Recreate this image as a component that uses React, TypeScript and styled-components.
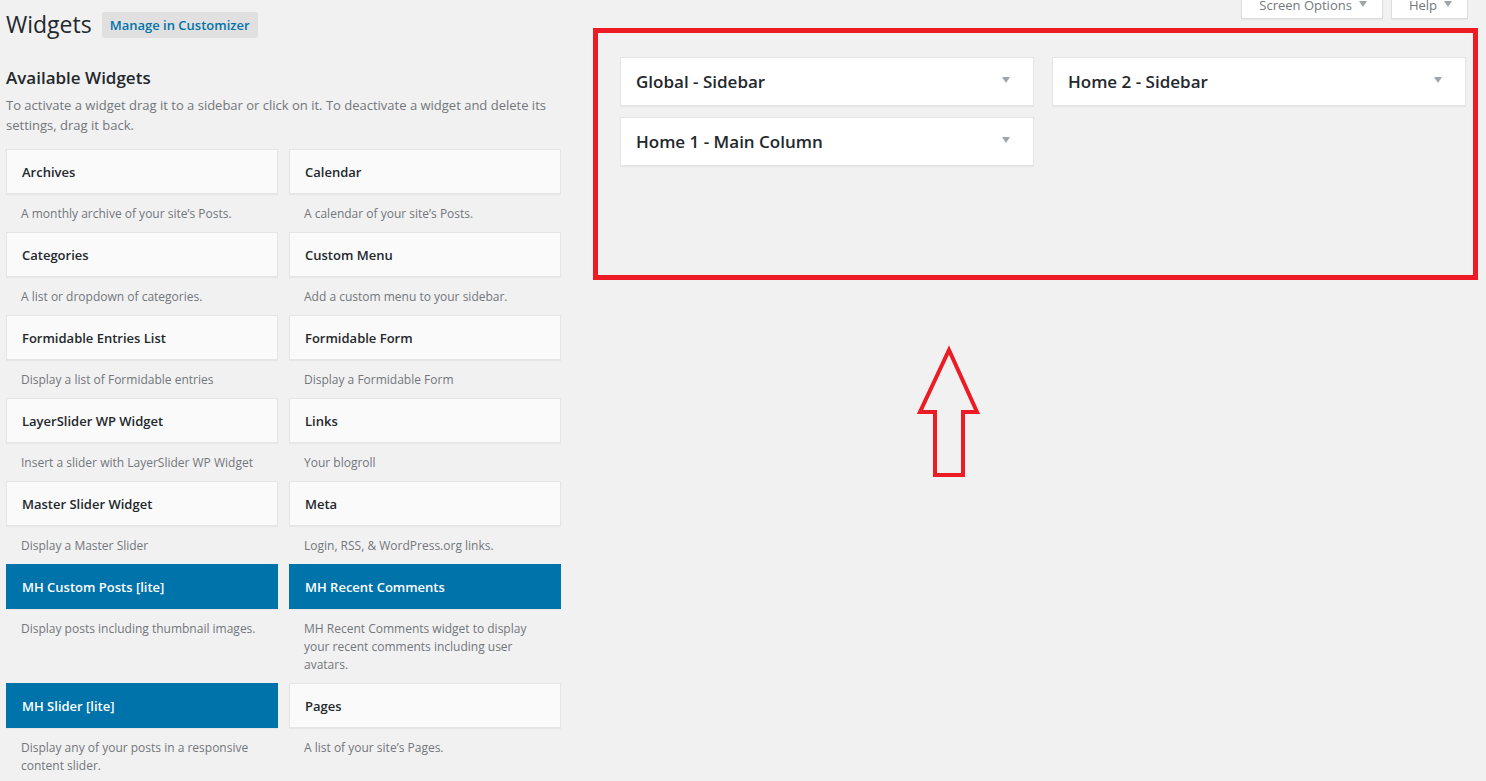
import styled, { createGlobalStyle } from "styled-components";

const GlobalStyle = createGlobalStyle`
    body {
        margin: 0;
        background: #f1f1f1;
        font-family: "Open Sans", "Noto Sans", sans-serif;
        color: #23282d;
    }
`;

const Page = styled.div`
    display: flex;
    align-items: flex-start;
    gap: 32px;
    padding-left: 6px;
`;

const LeftColumn = styled.div`
    width: 555px;
    flex-shrink: 0;
`;

const Header = styled.div`
    display: flex;
    align-items: center;
    gap: 10px;
    padding-top: 10px;
`;

const Title = styled.h1`
    margin: 0;
    font-size: 23px;
    line-height: 29px;
    font-weight: 400;
    color: #23282d;
`;

const CustomizerButton = styled.a`
    display: inline-flex;
    align-items: center;
    height: 26px;
    padding: 0 8px;
    border-radius: 2px;
    background: #e0e0e0;
    color: #0073aa;
    font-size: 13px;
    font-weight: 600;
    text-decoration: none;
`;

const SectionTitle = styled.h2`
    margin: 27px 0 0;
    font-size: 17px;
    line-height: 24px;
    font-weight: 600;
    color: #23282d;
`;

const SectionDesc = styled.p`
    margin: 5px 0 0;
    font-size: 13px;
    line-height: 20px;
    color: #72777c;
`;

const WidgetGrid = styled.div`
    display: grid;
    grid-template-columns: 272px 272px;
    column-gap: 11px;
    margin-top: 14px;
`;

const WidgetItem = styled.div``;

const WidgetTop = styled.div<{ $active?: boolean }>`
    box-sizing: border-box;
    height: 45px;
    display: flex;
    align-items: center;
    padding: 0 15px;
    border: 1px solid ${(p) => (p.$active ? "#0073aa" : "#e5e5e5")};
    background: ${(p) => (p.$active ? "#0073aa" : "#fafafa")};
    box-shadow: 0 1px 1px rgba(0, 0, 0, 0.04);
    color: ${(p) => (p.$active ? "#fff" : "#23282d")};
    font-size: 13px;
    font-weight: 600;
`;

const WidgetDesc = styled.div`
    padding: 11px 15px 9px;
    font-size: 12px;
    line-height: 18px;
    color: #72777c;
`;

const RightColumn = styled.div`
    width: 885px;
    flex-shrink: 0;
    display: flex;
    flex-direction: column;
`;

const ScreenTabs = styled.div`
    display: flex;
    justify-content: flex-end;
    gap: 8px;
    margin-right: 10px;
`;

const ScreenTab = styled.div`
    box-sizing: border-box;
    height: 19px;
    display: flex;
    align-items: flex-end;
    gap: 7px;
    padding: 0 15px 6px 17px;
    background: #fff;
    border: 1px solid #ddd;
    border-top: none;
    box-shadow: 0 1px 1px rgba(0, 0, 0, 0.04);
    font-size: 13px;
    line-height: 14px;
    color: #72777c;
`;

const TabCaret = styled.span`
    width: 0;
    height: 0;
    margin-bottom: 5px;
    border-left: 4px solid transparent;
    border-right: 4px solid transparent;
    border-top: 6px solid #a0a5aa;
`;

const Highlight = styled.div`
    box-sizing: border-box;
    height: 252px;
    margin-top: 9px;
    border: 5px solid #ed1c24;
    padding: 24px 7px 0 22px;
`;

const SidebarGrid = styled.div`
    display: grid;
    grid-template-columns: 414px 414px;
    column-gap: 18px;
    row-gap: 11px;
`;

const SidebarBox = styled.div`
    box-sizing: border-box;
    height: 49px;
    display: flex;
    align-items: center;
    justify-content: space-between;
    padding: 0 23px 0 15px;
    background: #fff;
    border: 1px solid #e5e5e5;
    box-shadow: 0 1px 1px rgba(0, 0, 0, 0.04);
`;

const SidebarName = styled.h2`
    margin: 0;
    font-size: 17px;
    font-weight: 600;
    color: #23282d;
`;

const SidebarCaret = styled.span`
    width: 0;
    height: 0;
    margin-bottom: 4px;
    border-left: 4px solid transparent;
    border-right: 4px solid transparent;
    border-top: 6px solid #a0a5aa;
`;

const Arrow = styled.svg`
    display: block;
    margin: 64px 0 0 322px;
`;

const widgets = [
    { name: "Archives", desc: "A monthly archive of your site’s Posts." },
    { name: "Calendar", desc: "A calendar of your site’s Posts." },
    { name: "Categories", desc: "A list or dropdown of categories." },
    { name: "Custom Menu", desc: "Add a custom menu to your sidebar." },
    { name: "Formidable Entries List", desc: "Display a list of Formidable entries" },
    { name: "Formidable Form", desc: "Display a Formidable Form" },
    { name: "LayerSlider WP Widget", desc: "Insert a slider with LayerSlider WP Widget" },
    { name: "Links", desc: "Your blogroll" },
    { name: "Master Slider Widget", desc: "Display a Master Slider" },
    { name: "Meta", desc: "Login, RSS, & WordPress.org links." },
    { name: "MH Custom Posts [lite]", desc: "Display posts including thumbnail images.", active: true },
    {
        name: "MH Recent Comments",
        desc: "MH Recent Comments widget to display your recent comments including user avatars.",
        active: true,
    },
    { name: "MH Slider [lite]", desc: "Display any of your posts in a responsive content slider.", active: true },
    { name: "Pages", desc: "A list of your site’s Pages." },
];

const sidebars = ["Global - Sidebar", "Home 2 - Sidebar", "Home 1 - Main Column"];

export default function App() {
    return (
        <>
            <GlobalStyle />
            <Page>
                <LeftColumn>
                    <Header>
                        <Title>Widgets</Title>
                        <CustomizerButton href="#">Manage in Customizer</CustomizerButton>
                    </Header>
                    <SectionTitle>Available Widgets</SectionTitle>
                    <SectionDesc>
                        To activate a widget drag it to a sidebar or click on it. To deactivate a widget and delete its
                        settings, drag it back.
                    </SectionDesc>
                    <WidgetGrid>
                        {widgets.map((w) => (
                            <WidgetItem key={w.name}>
                                <WidgetTop $active={w.active}>{w.name}</WidgetTop>
                                <WidgetDesc>{w.desc}</WidgetDesc>
                            </WidgetItem>
                        ))}
                    </WidgetGrid>
                </LeftColumn>
                <RightColumn>
                    <ScreenTabs>
                        <ScreenTab>
                            Screen Options <TabCaret />
                        </ScreenTab>
                        <ScreenTab>
                            Help <TabCaret />
                        </ScreenTab>
                    </ScreenTabs>
                    <Highlight>
                        <SidebarGrid>
                            {sidebars.map((s) => (
                                <SidebarBox key={s}>
                                    <SidebarName>{s}</SidebarName>
                                    <SidebarCaret />
                                </SidebarBox>
                            ))}
                        </SidebarGrid>
                    </Highlight>
                    <Arrow width="66" height="136" viewBox="0 0 66 136">
                        <polygon
                            points="34,6 62,68 48,68 48,131 20,131 20,68 5,68"
                            fill="none"
                            stroke="#ed1c24"
                            strokeWidth="4"
                        />
                    </Arrow>
                </RightColumn>
            </Page>
        </>
    );
}
